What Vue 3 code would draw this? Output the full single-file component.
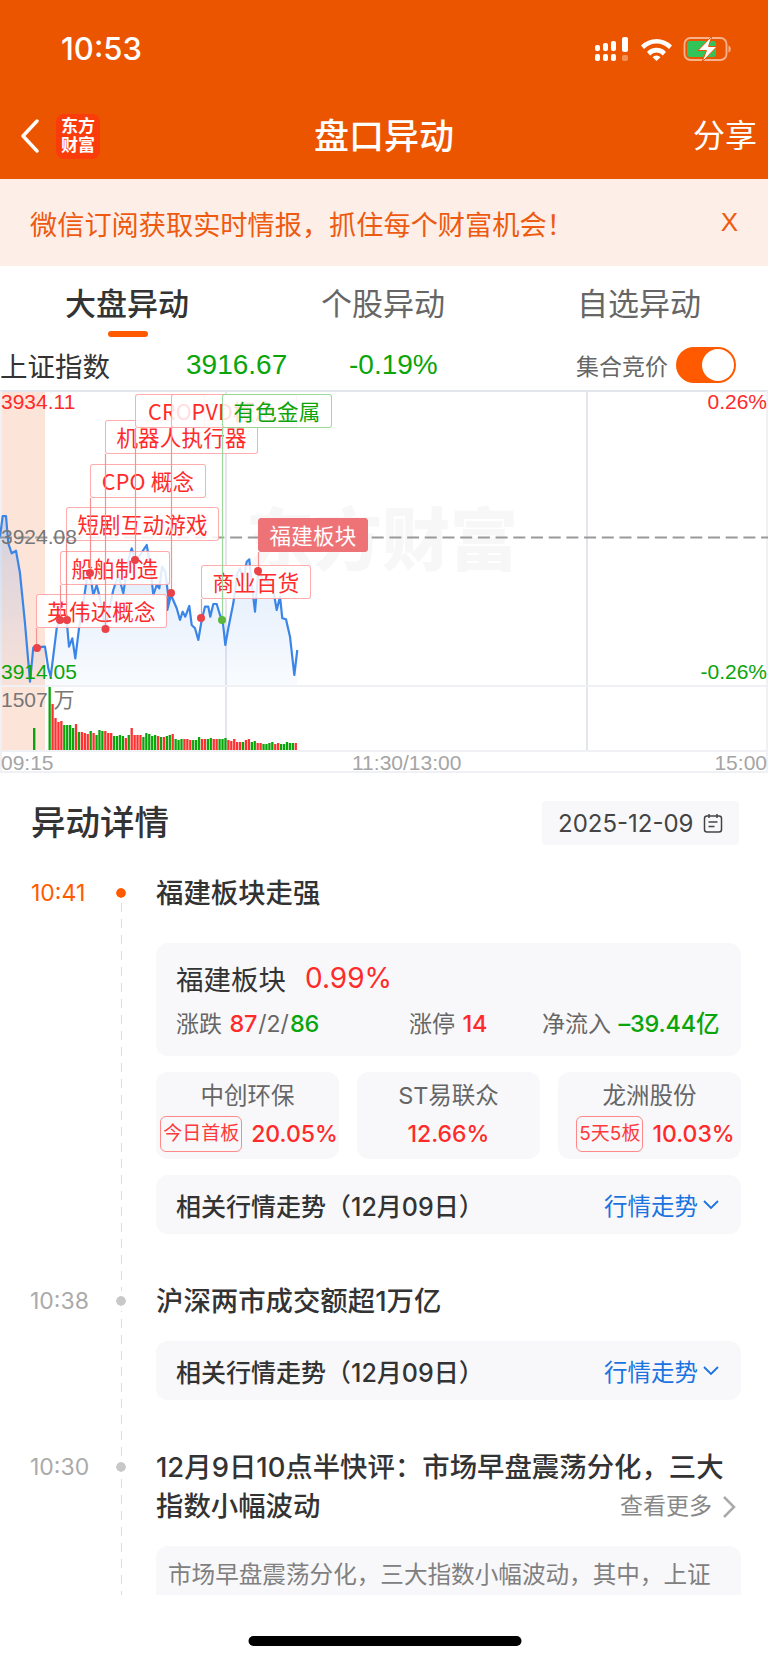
<script setup>
import { computed } from 'vue'

// traced from the chart, x/y in page pixels
const pts1 = [[0,110],[8,48],[18,48],[25,130],[35,160],[48,152],[60,220],[75,370],[90,545],[100,443],[135,440],[145,505],[152,530],[170,385],[180,360],[200,362],[207,440],[217,415],[226,475],[237,385],[250,310],[262,225],[270,220],[280,285],[290,255],[300,295],[316,388],[325,340],[340,270],[355,225],[370,280],[385,180],[395,145],[405,180],[420,165],[440,135],[450,190],[460,285],[470,255],[478,265],[486,200],[496,215],[505,290]]
  .map(([x, y]) => [x / 3, 500 + y / 3])
const pts2 = [[52,330],[63,285],[80,325],[90,360],[98,335],[106,350],[118,318],[125,375],[135,385],[145,420],[155,360],[165,320],[175,320],[181,350],[190,312],[200,312],[210,345],[218,362],[226,435],[235,385],[250,310],[262,220],[270,205],[280,240],[290,185],[298,178],[305,250],[315,335],[325,215],[340,240],[360,250],[370,270],[380,330],[390,290],[397,355],[408,358],[420,410],[433,525],[442,450]]
  .map(([x, y]) => [150 + x / 3, 500 + y / 3])
const pts = [...pts1, ...pts2]

const linePath = computed(() => pts.map(([x, y], i) => `${i ? 'L' : 'M'}${x.toFixed(1)} ${y.toFixed(1)}`).join(' '))
const areaPath = computed(() => `${linePath.value} L${pts[pts.length - 1][0].toFixed(1)} 685 L0 685 Z`)

// negative = green
const vols = [-63,46,32,28,29,-25,-25,-25,-22,26,-18,18,17,16,-19,17,-15,-20,-19,19,17,17,-14,-14,-15,-14,12,-15,22,15,15,15,-13,-17,-16,-14,-15,14,
  -13,13,-14,-15,16,-11,-10,-11,11,11,10,-10,-10,-13,11,11,-11,-12,11,11,-11,-11,-12,10,9,11,8,8,-8,10,11,-8,-9,7,7,-6,-6,-7,-8,6,7,-6,-6,-8,-7,-7,7]
const bars = computed(() => vols.map((v, i) => ({
  x: 48.5 + i * 2.93,
  h: Math.abs(v),
  color: v < 0 ? '#0aa50a' : '#ff3030'
})))

const tags = [
  { text: '英伟达概念', x: 36, y: 594, w: 131, dotX: 37, dotY: 648 },
  { text: '船舶制造', x: 60, y: 551, w: 110, dotX: 60, dotY: 620 },
  { text: '短剧互动游戏', x: 66, y: 507, w: 153, dotX: 67, dotY: 620 },
  { text: 'CPO 概念', x: 90, y: 464, w: 116, dotX: 90, dotY: 573 },
  { text: '机器人执行器', x: 105, y: 420, w: 153, dotX: 105.5, dotY: 629 },
  { text: 'CRO', x: 135, y: 394, w: 70, dotX: 135, dotY: 560 },
  { text: 'PVD概念', x: 171, y: 394, w: 126, dotX: 171, dotY: 593 },
  { text: '有色金属', x: 222, y: 394, w: 110, dotX: 222, dotY: 620, kind: 'down' },
  { text: '商业百货', x: 201, y: 565, w: 110, dotX: 201, dotY: 618 },
  { text: '福建板块', x: 258, y: 518, w: 110, dotX: 258, dotY: 571, kind: 'hot' }
]

const stocks = [
  { name: '中创环保', badge: '今日首板', pct: '20.05%', shift: 3 },
  { name: 'ST易联众', badge: '', pct: '12.66%', shift: 0 },
  { name: '龙洲股份', badge: '5天5板', pct: '10.03%', shift: 12 }
]
</script>

<template>
  <div class="phone">
    <header class="top">
      <div class="status">
        <span class="clock">10:53</span>
        <svg class="status-icons" width="136" height="24" viewBox="0 0 136 24">
          <g fill="#fff">
            <rect x="0" y="8" width="5" height="6" rx="2" />
            <rect x="0" y="17" width="5" height="7" rx="2" />
            <rect x="8" y="6" width="5" height="8" rx="2" />
            <rect x="8" y="17" width="5" height="7" rx="2" />
            <rect x="16" y="4" width="5" height="10" rx="2" />
            <rect x="16" y="17" width="5" height="7" rx="2" />
            <rect x="27" y="0" width="6" height="15" rx="2" />
            <rect x="27" y="18" width="6" height="6" rx="2" opacity=".35" />
            <path d="M46 8.500a22 22 0 0 1 31 0l-3 3.600a17 17 0 0 0-25 0z" />
            <path d="M52 15a13 13 0 0 1 19 0l-3.200 3.400a8.500 8.500 0 0 0-12.600 0z" />
            <path d="M57.500 20.200a5.500 5.500 0 0 1 8 0l-4 3.800z" />
          </g>
          <rect x="89.500" y="1" width="42" height="22" rx="6" fill="none" stroke="#fff" stroke-opacity=".55" stroke-width="1.800" />
          <path d="M133.500 8.500c1.500.5 2.300 2 2.300 3.500s-.8 3-2.300 3.500z" fill="#fff" fill-opacity=".55" />
          <rect x="92" y="4" width="29" height="16" rx="3" fill="#32c35a" />
          <path d="M117 -1 103 13.500h8.500L107 25l15-15.500h-8.500z" fill="#fff" stroke="#ec5500" stroke-width="1" />
        </svg>
      </div>
      <nav class="nav">
        <div class="nav-left">
          <svg width="20" height="34" viewBox="0 0 20 34">
            <path d="M17 2 3 17l14 15" fill="none" stroke="#fff" stroke-width="3.400" stroke-linecap="round" stroke-linejoin="round" />
          </svg>
          <div class="logo"><span>东方</span><span>财富</span></div>
        </div>
        <h1 class="nav-title">盘口异动</h1>
        <span class="nav-share">分享</span>
      </nav>
    </header>

    <div class="banner">
      <span>微信订阅获取实时情报，抓住每个财富机会！</span>
      <span class="banner-x">X</span>
    </div>

    <div class="tabs">
      <div class="tab active">大盘异动</div>
      <div class="tab">个股异动</div>
      <div class="tab">自选异动</div>
    </div>

    <div class="index-row">
      <span class="index-name">上证指数</span>
      <span class="index-val">3916.67</span>
      <span class="index-val">-0.19%</span>
      <div class="auction">
        <span>集合竞价</span>
        <div class="toggle"><i></i></div>
      </div>
    </div>

    <section class="chart">
      <div class="watermark">东方财富</div>
      <svg class="chart-layer" width="768" height="383" viewBox="0 390 768 383">
        <defs>
          <linearGradient id="area" x1="0" y1="0" x2="0" y2="1">
            <stop offset="0" stop-color="#3a86e8" stop-opacity=".2" />
            <stop offset="1" stop-color="#3a86e8" stop-opacity=".03" />
          </linearGradient>
        </defs>
        <rect x="0" y="391" width="45" height="359" fill="#fde4d9" />
        <g stroke="#e4e6ee" stroke-width="2">
          <path d="M0 391H768" />
          <path d="M226 391V750M587 391V750" />
        </g>
        <g stroke="#f0f1f4" stroke-width="2">
          <path d="M0 686H768M0 751H768M0 772H768M767 391V772M1 391V772" />
        </g>
        <path d="M0 537.500H768" stroke="#999" stroke-width="2" stroke-dasharray="12 5.700" />
        <path :d="areaPath" fill="url(#area)" />
        <path :d="linePath" fill="none" stroke="#3a86e8" stroke-width="2.200" stroke-linejoin="round" />
        <rect x="33" y="728" width="2.400" height="22" fill="#0aa50a" />
        <rect v-for="(b, i) in bars" :key="i" :x="b.x" :y="750 - b.h" width="2.300" :height="b.h" :fill="b.color" />
      </svg>

      <div
        v-for="t in tags"
        :key="t.text"
        class="tag"
        :class="t.kind"
        :style="{ left: t.x + 'px', top: t.y - 390 + 'px', width: t.w + 'px' }"
      >{{ t.text }}</div>

      <svg class="chart-layer" width="768" height="383" viewBox="0 390 768 383">
        <g v-for="t in tags" :key="t.text">
          <path
            :d="`M${t.x + 0.5} ${t.y + 34}V${t.dotY}`"
            :stroke="t.kind === 'down' ? '#9ad89a' : '#f79090'"
            stroke-width="1.200"
          />
          <circle :cx="t.dotX" :cy="t.dotY" r="4" :fill="t.kind === 'down' ? '#5cb83c' : '#ea4248'" />
        </g>
      </svg>

      <span class="axis red" style="left: 1px; top: 0">3934.11</span>
      <span class="axis gray" style="left: 1px; top: 135px">3924.08</span>
      <span class="axis green" style="left: 1px; top: 270px">3914.05</span>
      <span class="axis red" style="right: 1px; top: 0">0.26%</span>
      <span class="axis green" style="right: 1px; top: 270px">-0.26%</span>
      <span class="axis gray" style="left: 1px; top: 298px">1507 万</span>
      <span class="axis light" style="left: 1px; top: 361px">09:15</span>
      <span class="axis light" style="left: 352px; top: 361px">11:30/13:00</span>
      <span class="axis light" style="right: 1px; top: 361px">15:00</span>
    </section>

    <section class="detail">
      <div class="detail-head">
        <h2>异动详情</h2>
        <div class="date">
          <span>2025-12-09</span>
          <svg width="20" height="20" viewBox="0 0 20 20" fill="none" stroke="#444" stroke-width="1.500">
            <rect x="1.500" y="3" width="17" height="16" rx="2.500" />
            <path d="M6 1v4M14 1v4M5.500 9h9M5.500 13.500h6" />
          </svg>
        </div>
      </div>

      <div class="timeline">
        <article class="event">
          <div class="event-head">
            <div class="when now"><span class="time">10:41</span><i class="dot"></i></div>
            <div class="event-title">福建板块走强</div>
          </div>
          <div class="event-body first">
            <div class="card sector">
              <div class="sector-top"><span>福建板块</span><b class="red">0.99%</b></div>
              <div class="sector-stats">
                <span>涨跌 <em class="red">87</em>/2/<em class="green">86</em></span>
                <span>涨停 <em class="red">14</em></span>
                <span>净流入 <em class="green">–39.44亿</em></span>
              </div>
            </div>
            <div class="stocks">
              <div v-for="s in stocks" :key="s.name" class="card stock">
                <div class="stock-name">{{ s.name }}</div>
                <div class="stock-row" :style="{ marginLeft: s.shift + 'px' }">
                  <span v-if="s.badge" class="badge">{{ s.badge }}</span>
                  <span class="stock-pct">{{ s.pct }}</span>
                </div>
              </div>
            </div>
            <div class="card trend">
              <span class="trend-name">相关行情走势（12月09日）</span>
              <span class="trend-link">行情走势
                <svg width="16" height="10" viewBox="0 0 16 10"><path d="M1 1l7 7 7-7" fill="none" stroke="#1a73e0" stroke-width="1.800" /></svg>
              </span>
            </div>
          </div>
        </article>

        <article class="event">
          <div class="event-head">
            <div class="when"><span class="time">10:38</span><i class="dot"></i></div>
            <div class="event-title">沪深两市成交额超1万亿</div>
          </div>
          <div class="event-body">
            <div class="card trend">
              <span class="trend-name">相关行情走势（12月09日）</span>
              <span class="trend-link">行情走势
                <svg width="16" height="10" viewBox="0 0 16 10"><path d="M1 1l7 7 7-7" fill="none" stroke="#1a73e0" stroke-width="1.800" /></svg>
              </span>
            </div>
          </div>
        </article>

        <article class="event">
          <div class="event-head">
            <div class="when"><span class="time">10:30</span><i class="dot"></i></div>
            <div class="event-title">
              12月9日10点半快评：市场早盘震荡分化，三大<br />指数小幅波动
              <span class="more">查看更多
                <svg width="14" height="24" viewBox="0 0 14 24"><path d="M2 2l10 10L2 22" fill="none" stroke="#aaa" stroke-width="2.500" /></svg>
              </span>
            </div>
          </div>
          <div class="event-body">
            <div class="card summary">市场早盘震荡分化，三大指数小幅波动，其中，上证</div>
          </div>
        </article>
      </div>
    </section>

    <div class="home-bar"></div>
  </div>
</template>

<style scoped>
.phone {
  position: relative;
  width: 768px;
  height: 1663px;
  overflow: hidden;
  background: #fff;
  font-family: Inter, "Noto Sans CJK SC", sans-serif;
  color: #333;
}

.top {
  height: 179px;
  background: #ec5500;
  color: #fff;
}

.status {
  height: 100px;
  padding: 30px 37px 0 61px;
  box-sizing: border-box;
  display: flex;
  justify-content: space-between;
  align-items: flex-start;
}

.clock {
  font-size: 31px;
  line-height: 38px;
  font-weight: 500;
}

.status-icons {
  margin-top: 7px;
}

.nav {
  height: 72px;
  display: grid;
  grid-template-columns: 1fr auto 1fr;
  align-items: center;
  padding: 0 20px;
}

.nav-left {
  display: flex;
  align-items: center;
  gap: 16px;
}

.logo {
  width: 44px;
  height: 45px;
  border-radius: 8px;
  background: #fa3c0a;
  display: flex;
  flex-direction: column;
  align-items: center;
  justify-content: center;
  font-size: 17px;
  line-height: 19px;
  font-weight: 700;
}

.nav-title {
  margin: 0;
  font-size: 35px;
  line-height: 44px;
  font-weight: 500;
}

.nav-share {
  justify-self: end;
  margin-right: -9px;
  font-size: 32px;
  line-height: 44px;
}

.banner {
  height: 87px;
  padding: 0 30px;
  display: flex;
  align-items: center;
  justify-content: space-between;
  background: #fdefe7;
  color: #ee5a10;
  font-size: 27.200px;
}

.banner-x {
  font-family: "Liberation Sans", sans-serif;
  font-size: 26px;
}

.tabs {
  height: 74px;
  display: grid;
  grid-template-columns: repeat(3, 1fr);
}

.tab {
  position: relative;
  padding: 19px 2px 0 0;
  text-align: center;
  font-size: 31px;
  line-height: 38px;
  color: #666;
}

.tab.active {
  color: #333;
  font-weight: 500;
}

.tab.active::after {
  content: "";
  position: absolute;
  left: 108px;
  top: 65px;
  width: 40px;
  height: 6px;
  border-radius: 3px;
  background: #ff5a00;
}

.index-row {
  height: 50px;
  display: grid;
  grid-template-columns: 186px 163px 90px 1fr;
  align-items: center;
  font-size: 27.500px;
}

.index-name {
  margin-top: -1px;
}

.index-val {
  color: #0aa50a;
  font-family: "Liberation Sans", sans-serif;
  font-size: 28px;
}

.auction {
  display: flex;
  align-items: center;
  justify-content: flex-end;
  gap: 8px;
  padding-right: 32px;
  font-size: 23px;
  color: #666;
}

.toggle {
  position: relative;
  width: 60px;
  height: 36px;
  border-radius: 18px;
  background: #ff5a00;
}

.toggle i {
  position: absolute;
  right: 2px;
  top: 2px;
  width: 32px;
  height: 32px;
  border-radius: 50%;
  background: #fff;
}

.chart {
  position: relative;
  height: 383px;
  font-family: "Liberation Sans", "Noto Sans CJK SC", sans-serif;
}

.watermark {
  position: absolute;
  left: 246px;
  top: 106px;
  font-family: "Noto Sans CJK SC", sans-serif;
  font-size: 68px;
  line-height: 80px;
  font-weight: 900;
  color: #f7f7f7;
  white-space: nowrap;
}

.chart-layer {
  position: absolute;
  left: 0;
  top: 0;
}

.tag {
  position: absolute;
  height: 34px;
  box-sizing: border-box;
  border: 1px solid rgba(255, 70, 70, 0.45);
  border-radius: 3px;
  background: rgba(255, 255, 255, 0.85);
  color: #ff2a2a;
  font-family: "Noto Sans CJK SC", sans-serif;
  font-size: 21.500px;
  line-height: 31px;
  letter-spacing: 0.2px;
  text-align: center;
  white-space: nowrap;
  overflow: hidden;
}

.tag.down {
  border-color: rgba(10, 165, 10, 0.4);
  color: #0aa50a;
}

.tag.hot {
  border-color: #ee7377;
  background: #ee7377;
  color: #fff;
}

.axis {
  position: absolute;
  font-size: 21px;
  line-height: 24px;
  white-space: nowrap;
}

.axis.red { color: #ff2a2a; }
.axis.green { color: #0aa50a; }
.axis.gray { color: #777; }
.axis.light { color: #a5a5a5; }

.detail {
  padding-top: 28px;
}

.detail-head {
  height: 44px;
  padding: 0 29px 0 31px;
  display: flex;
  align-items: center;
  justify-content: space-between;
}

.detail-head h2 {
  margin: 0;
  font-size: 34.500px;
  font-weight: 500;
  line-height: 44px;
}

.date {
  width: 197px;
  height: 44px;
  box-sizing: border-box;
  padding: 0 16px;
  display: flex;
  align-items: center;
  justify-content: space-between;
  border-radius: 4px;
  background: #f8f8fa;
  font-size: 24px;
  color: #444;
}

.timeline {
  position: relative;
  height: 750px;
  padding: 29px 27px 0 0;
  box-sizing: border-box;
  overflow: hidden;
}

.timeline::before {
  content: "";
  position: absolute;
  left: 120.500px;
  top: 58px;
  bottom: 0;
  width: 1px;
  background: repeating-linear-gradient(to bottom, #dcdcdc 0 9px, transparent 9px 16px);
}

.event {
  position: relative;
  padding-bottom: 48px;
}

.event-head {
  display: flex;
  align-items: flex-start;
}

.when {
  flex: none;
  width: 156px;
  height: 38px;
  padding-left: 31px;
  box-sizing: border-box;
  display: flex;
  align-items: center;
  color: #aaa;
}

.when:not(.now) {
  padding-left: 30px;
}

.time {
  width: 85px;
  font-size: 23px;
}

.when:not(.now) .time {
  width: 86px;
}

.when.now {
  color: #ff5a00;
}

.dot {
  width: 10px;
  height: 10px;
  border-radius: 50%;
  background: #c8c8c8;
  outline: 5px solid #fff;
}

.when.now .dot {
  background: #ff5a00;
}

.event-title {
  position: relative;
  flex: 1;
  font-size: 27.400px;
  line-height: 39px;
  font-weight: 500;
  white-space: nowrap;
}

.more {
  position: absolute;
  right: 5px;
  bottom: 0;
  display: flex;
  align-items: center;
  gap: 10px;
  font-size: 23px;
  font-weight: 400;
  color: #888;
}

.event-body {
  margin: 20px 0 0 156px;
}

.event-body.first {
  margin-top: 30px;
  display: flex;
  flex-direction: column;
  gap: 16px;
}

.card {
  background: #f8f8fa;
  border-radius: 12px;
}

.sector {
  height: 113px;
  padding: 16px 20px 0;
  box-sizing: border-box;
}

.sector-top {
  display: flex;
  gap: 19px;
  align-items: center;
  height: 38px;
  font-size: 27.500px;
}

.sector-top b {
  font-weight: 400;
  font-size: 28px;
}

.sector-stats {
  margin-top: 11px;
  display: grid;
  grid-template-columns: 233px 133px 1fr;
  font-size: 23px;
  line-height: 32px;
  color: #666;
  white-space: nowrap;
}

.sector-stats em {
  font-style: normal;
  font-weight: 500;
  font-size: 23.500px;
  margin: 0 1px;
  letter-spacing: -0.2px;
}

.red { color: #ff2a2a; }
.green { color: #0aa50a; }

.stocks {
  display: grid;
  grid-template-columns: repeat(3, 1fr);
  gap: 18px;
}

.stock {
  height: 87px;
  text-align: center;
  padding-top: 7px;
  box-sizing: border-box;
}

.stock-name {
  font-size: 23.500px;
  line-height: 34px;
  color: #666;
}

.stock-row {
  margin-top: 3px;
  display: flex;
  align-items: center;
  justify-content: center;
  gap: 9px;
  height: 36px;
}

.badge {
  height: 36px;
  padding: 0 2px;
  box-sizing: border-box;
  border: 1px solid #f88;
  border-radius: 6px;
  color: #ff3a3a;
  font-size: 19px;
  line-height: 34px;
  white-space: nowrap;
}

.stock-pct {
  color: #ff2a2a;
  font-size: 23px;
  font-weight: 500;
  white-space: nowrap;
}

.trend {
  display: flex;
  align-items: center;
  justify-content: space-between;
  height: 59px;
  padding: 0 22px 0 20px;
}

.trend-name {
  font-size: 25px;
  font-weight: 500;
}

.trend-link {
  display: flex;
  align-items: center;
  gap: 5px;
  color: #1a73e0;
  font-size: 23.500px;
}

.summary {
  height: 100px;
  padding: 12px 12px 0;
  box-sizing: border-box;
  font-size: 23.600px;
  line-height: 34px;
  color: #808080;
  white-space: nowrap;
}

.home-bar {
  width: 273px;
  height: 10px;
  margin: 41px auto 0;
  transform: translateX(0.5px);
  border-radius: 5px;
  background: #000;
}
</style>
